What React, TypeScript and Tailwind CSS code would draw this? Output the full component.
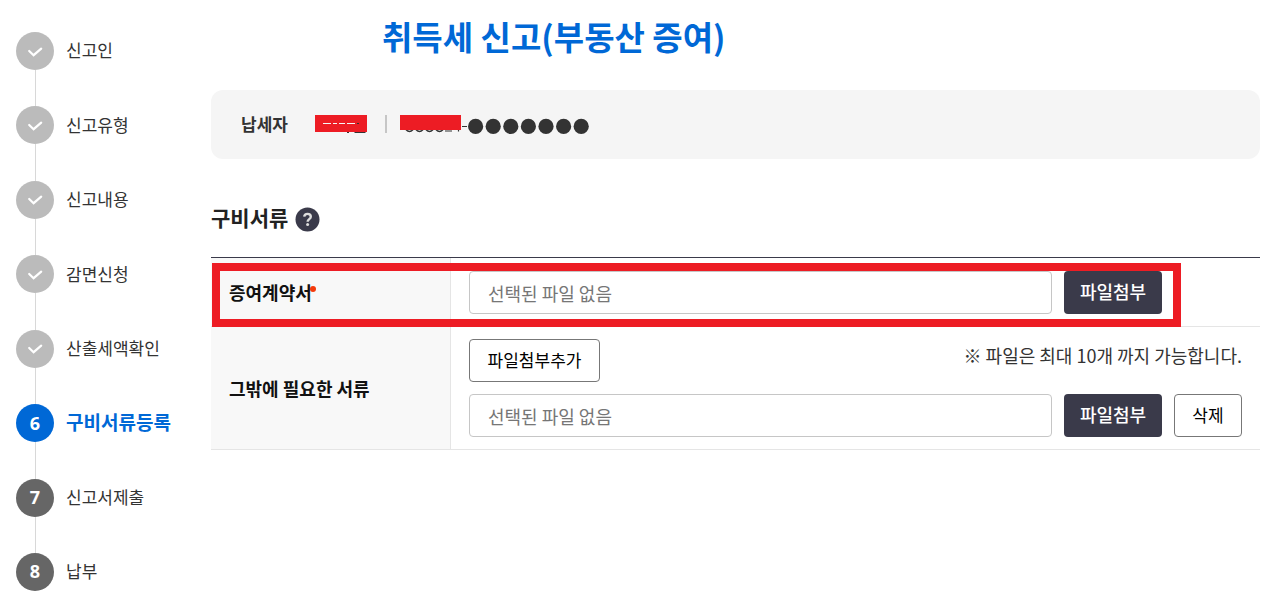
import React from "react";

type StepState = "done" | "current" | "todo";

const steps: { label: string; state: StepState }[] = [
  { label: "신고인", state: "done" },
  { label: "신고유형", state: "done" },
  { label: "신고내용", state: "done" },
  { label: "감면신청", state: "done" },
  { label: "산출세액확인", state: "done" },
  { label: "구비서류등록", state: "current" },
  { label: "신고서제출", state: "todo" },
  { label: "납부", state: "todo" },
];

const circleColor: Record<StepState, string> = {
  done: "bg-[#bbbbbb]",
  current: "bg-[#0068d6]",
  todo: "bg-[#666666]",
};

function CheckMark() {
  return (
    <svg viewBox="0 0 38 38" className="size-[38px]" fill="none" aria-hidden="true">
      <path d="M13.2 19 L17.6 23.2 L25.2 16.6" stroke="white" strokeWidth="2.2" strokeLinecap="round" />
    </svg>
  );
}

function Steps() {
  return (
    <nav aria-label="신고 단계" className="flex w-[195px] shrink-0">
      <ol className="flex flex-1 flex-col">
        {steps.map((s, i) => {
          const last = i === steps.length - 1;
          return (
            <li key={s.label} className={last ? "flex flex-col" : "flex flex-1 flex-col"}>
              <div className="flex h-[38px] shrink-0 items-center gap-3">
                <span
                  className={`flex size-[38px] items-center justify-center rounded-full pb-px font-['Open_Sans'] text-lg font-bold text-white ${circleColor[s.state]}`}
                >
                  {s.state === "done" ? <CheckMark /> : i + 1}
                </span>
                <span
                  aria-current={s.state === "current" ? "step" : undefined}
                  className={
                    s.state === "current"
                      ? "pb-0.5 text-[19px] font-bold text-[#0068d6]"
                      : "pb-0.5 text-[17px] text-[#333333]"
                  }
                >
                  {s.label}
                </span>
              </div>
              {!last && <span className="ml-[19px] w-px flex-1 bg-[#d8d8d8]" />}
            </li>
          );
        })}
      </ol>
    </nav>
  );
}

function FileField({ id, label }: { id: string; label: string }) {
  return (
    <>
      <input
        id={id}
        aria-label={label}
        type="text"
        readOnly
        placeholder="선택된 파일 없음"
        className="h-[43px] min-w-0 flex-1 rounded border border-[#c6c6c6] bg-white px-[18px] text-[18px] text-[#333333] placeholder:text-[#767676]"
      />
      <button type="button" className="h-[43px] w-[98px] shrink-0 rounded bg-[#3a3a4a] pb-0.5 text-[18px] font-medium text-white">
        파일첨부
      </button>
    </>
  );
}

function Taxpayer() {
  return (
    <dl className="mt-[23px] flex h-[69px] items-center rounded-xl bg-[#f5f5f5] px-[30px] pb-0.5 text-[#333333]">
      <dt className="w-[74px] text-[17px] font-bold">납세자</dt>
      <dd className="flex items-center">
        <svg width="53" height="20" viewBox="0 0 53 20" className="shrink-0" role="img" aria-label="이름 비공개">
          <path d="M32 18.5h2M39.5 18.5h11" stroke="#333333" />
          <path d="M0 1h52v17H0z" fill="#ed1c24" />
          <path d="M8 9.5h8M18 9.5h4M24 9.5h6M32 9.5h8" stroke="#f5f5f5" />
          <path d="M42 9.5h2" stroke="#333333" />
        </svg>
        <span className="mr-[13px] ml-[17px] h-[18px] w-0.5 bg-[#c6c6c6]" />
        <svg width="68" height="20" viewBox="0 0 68 20" className="shrink-0" role="img" aria-label="번호 비공개">
          <path
            d="M6 15.8q3.5 3.4 7 0M16 15.8q3.5 3.4 7 0M26 15.8q3.5 3.4 7 0M36 15.8q3.5 3.4 7 0M45 17h7M58.5 15v2.5M62 12.5h5"
            stroke="#333333"
            strokeWidth="1.2"
            fill="none"
          />
          <path d="M0 1h61v15H0z" fill="#ed1c24" />
        </svg>
        <svg width="122" height="20" viewBox="0 0 122 20" className="shrink-0" role="img" aria-label="●●●●●●●" fill="#333333">
          {[0, 1, 2, 3, 4, 5, 6].map((n) => (
            <circle key={n} cx={7.6 + n * 17.6} cy="12.4" r="7.6" />
          ))}
        </svg>
      </dd>
    </dl>
  );
}

function HelpIcon() {
  return (
    <svg viewBox="0 0 25 25" className="size-[25px]" fill="none" aria-hidden="true">
      <circle cx="12.5" cy="12.5" r="12" fill="#3a3a4a" />
      <path d="M9.2 9.7C9.4 7.7 10.7 6.9 12.5 6.9c2 0 3.3 1.1 3.3 2.8 0 2.4-3.2 2.4-3.2 5" stroke="#dddddd" strokeWidth="2.4" />
      <circle cx="12.6" cy="17.6" r="1.5" fill="#dddddd" />
    </svg>
  );
}

export default function App() {
  return (
    <div className="flex min-h-screen bg-white font-['Noto_Sans_CJK_KR','Noto_Sans_CJK_SC',sans-serif]">
      <div className="flex pt-8 pb-4 pl-4">
        <Steps />
      </div>
      <main className="min-w-0 flex-1 pt-2 pr-[9px]">
        <h1 className="pb-[3px] pl-[171px] text-[33px] leading-[56px] font-bold text-[#0068d6]">취득세 신고(부동산 증여)</h1>
        <Taxpayer />
        <div className="mt-[42px] flex h-[37px] items-center gap-[7px]">
          <h2 className="pb-1 text-[21px] font-bold text-[#222222]">구비서류</h2>
          <button type="button" aria-label="구비서류 도움말">
            <HelpIcon />
          </button>
        </div>
        <div className="relative mt-[19px]">
          <table className="w-full border-separate border-spacing-0 border-t border-[#3a3a4a]">
            <tbody>
              <tr>
                <th scope="row" className="w-60 border-r border-b border-[#e5e5e5] bg-[#f8f8f8] px-[18px] text-left text-[18px] font-bold text-[#111111]">
                  <span className="flex">
                    증여계약서
                    <i className="mt-[7px] -ml-0.5 size-1.5 rounded-full bg-[#f33a0b]" />
                  </span>
                </th>
                <td className="border-b border-[#e5e5e5] px-[18px] pt-[13px] pb-3">
                  <div className="flex gap-3 pr-20">
                    <FileField id="contract" label="증여계약서" />
                  </div>
                </td>
              </tr>
              <tr>
                <th scope="row" className="border-r border-b border-[#e5e5e5] bg-[#f8f8f8] px-[18px] text-left text-[18px] font-bold text-[#111111]">
                  그밖에 필요한 서류
                </th>
                <td className="border-b border-[#e5e5e5] px-[18px] py-3">
                  <div className="flex items-start justify-between">
                    <button type="button" className="h-[43px] w-[131px] rounded border border-[#777777] pb-0.5 text-[17px] text-black">
                      파일첨부추가
                    </button>
                    <p className="text-[18px] leading-8 text-[#333333]">※ 파일은 최대 10개 까지 가능합니다.</p>
                  </div>
                  <div className="mt-3 flex gap-3">
                    <FileField id="others" label="그밖에 필요한 서류" />
                    <button type="button" className="h-[43px] w-[68px] shrink-0 rounded border border-[#777777] pb-0.5 text-[17px] text-black">
                      삭제
                    </button>
                  </div>
                </td>
              </tr>
            </tbody>
          </table>
          <div className="pointer-events-none absolute top-1.5 right-[79px] left-px h-16 border-8 border-[#ed1c24]" />
        </div>
      </main>
    </div>
  );
}
